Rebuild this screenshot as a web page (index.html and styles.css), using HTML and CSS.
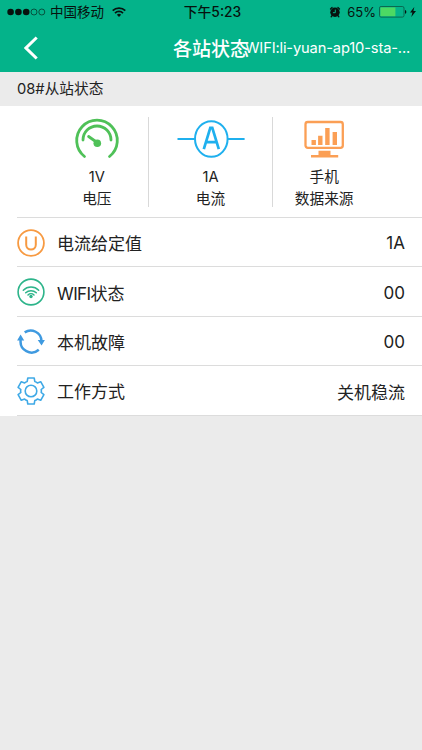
FILE: index.html
```html
<!DOCTYPE html>
<html lang="zh-CN">
<head>
  <meta charset="UTF-8">
  <meta name="viewport" content="width=device-width, initial-scale=1.0">
  <title>各站状态</title>
  <link rel="stylesheet" href="styles.css">
</head>
<body>
  <header>
    <div class="status-bar">
      <div class="carrier">
        <svg class="signal" width="39" height="8" viewBox="0 0 39 8">
          <g fill="#07120e"><circle cx="3.6" cy="4" r="3.3"/><circle cx="11.4" cy="4" r="3.3"/><circle cx="19.2" cy="4" r="3.3"/></g>
          <g fill="none" stroke="#07120e" stroke-width=".6"><circle cx="27" cy="4" r="3"/><circle cx="34.8" cy="4" r="3"/></g>
        </svg>
        <span>中国移动</span>
        <svg class="wifi" width="14" height="10" viewBox="0 0 14 10">
          <g fill="none" stroke="#07120e" stroke-width="1.7"><path d="M.7 3.7a9 9 0 0 1 12.6 0"/><path d="M3 6.1a5.7 5.7 0 0 1 8 0"/></g>
          <path fill="#07120e" d="M4.9 7.8a3 3 0 0 1 4.2 0L7 10z"/>
        </svg>
      </div>
      <div class="time">下午5:23</div>
      <div class="battery">
        <svg width="12" height="12" viewBox="0 0 12 12">
          <circle cx="6" cy="6.2" r="4.7" fill="#07120e"/>
          <path d="M1.5 3l1.6-1.6M10.5 3L8.9 1.4M3 9.8l-.8.9M9 9.8l.8.9" stroke="#07120e" stroke-width="1.3" stroke-linecap="round"/>
          <path d="M6.3 3.6v3.1H3.9" fill="none" stroke="#04b38a" stroke-width="1"/>
        </svg>
        <span>65%</span>
        <svg class="cell" width="28" height="12" viewBox="0 0 28 12">
          <rect x=".5" y=".5" width="24.5" height="10.6" rx="1.6" fill="none" stroke="#0b5543" stroke-width=".8"/>
          <path fill="#4cd964" d="M1.4 1.4h15v8.8h-15z"/>
          <path fill="#07120e" d="M26 4c1.8.2 1.8 3.6 0 3.8z"/>
        </svg>
        <svg class="bolt" width="6" height="10" viewBox="0 0 6 10"><path fill="#07120e" d="M4.3 0L0 5.6h2.4L1.3 10 6 4.1H3.4z"/></svg>
      </div>
    </div>
    <div class="nav-bar">
      <svg class="back" width="15" height="24" viewBox="0 0 15 24"><path d="M12.7 1.5L2 12l10.7 10.5" fill="none" stroke="#fff" stroke-width="3"/></svg>
      <h1>各站状态</h1>
      <span class="ssid">WIFI:li-yuan-ap10-sta-...</span>
    </div>
  </header>

  <div class="section-title">08#从站状态</div>

  <main>
    <div class="summary">
      <div class="item">
        <svg width="46" height="42" viewBox="0 0 46 42">
          <g fill="none" stroke="#4fc158" stroke-width="2.8" stroke-linecap="round">
            <path d="M10.5 38.5A20.3 20.3 0 1 1 35.5 38.5"/>
            <path d="M9 22a14 14 0 0 1 28 0"/>
            <path d="M14.6 18.5l8.5 6"/>
          </g>
          <circle cx="23.3" cy="25.3" r="3.8" fill="#4fc158"/>
        </svg>
        <p>1V</p>
        <p>电压</p>
      </div>
      <div class="item wide">
        <svg width="68" height="42" viewBox="0 0 68 42">
          <g fill="none" stroke="#1fb0ee" stroke-width="2">
            <ellipse cx="34.3" cy="21" rx="16.3" ry="17.8"/>
            <path d="M.5 21H18M50.6 21h17"/>
            <path d="M26.8 31.2l6.5-21.3h2l6.5 21.3M29.3 24.2h10" stroke-width="2.7"/>
          </g>
        </svg>
        <p>1A</p>
        <p>电流</p>
      </div>
      <div class="item">
        <svg width="42" height="42" viewBox="0 0 42 42">
          <rect x="2.5" y="4" width="37.3" height="25.8" rx="2.3" fill="none" stroke="#fb9f55" stroke-width="2.3"/>
          <path fill="#fb9f55" d="M8.5 22h4.4v5H8.5zM15.1 17.8h4.4V27h-4.4zM22.2 10h4.4v17h-4.4zM29.6 14h4.4v13h-4.4zM15.5 32.7h12v4.2h7.7v2.7H8v-2.7h7.5z"/>
        </svg>
        <p>手机</p>
        <p>数据来源</p>
      </div>
    </div>

    <ul class="rows">
      <li>
        <svg width="28" height="28" viewBox="0 0 28 28" fill="none" stroke="#f79a42">
          <circle cx="14" cy="14" r="12.9" stroke-width="1.8"/>
          <path d="M9.2 7.5v8.3a4.8 4.8 0 0 0 9.6 0V7.5" stroke-width="2"/>
        </svg>
        <span>电流给定值</span>
        <b>1A</b>
      </li>
      <li>
        <svg width="28" height="28" viewBox="0 0 28 28" fill="none" stroke="#2db48a">
          <circle cx="14" cy="14" r="12.9" stroke-width="1.6"/>
          <path d="M6.3 12.2a11 11 0 0 1 15.4 0M8.7 14.8a7.6 7.6 0 0 1 10.6 0M11 17a4.3 4.3 0 0 1 6 0" stroke-width="1.5" stroke-linecap="round"/>
          <circle cx="14" cy="18.5" r="1.7" fill="#2db48a" stroke="none"/>
        </svg>
        <span><i>WIFI</i>状态</span>
        <b>00</b>
      </li>
      <li>
        <svg width="28" height="28" viewBox="0 0 28 28">
          <g fill="none" stroke="#3f9ae0" stroke-width="2.5">
            <path d="M7.7 5.4A10.8 10.8 0 0 1 24.5 14"/>
            <path d="M21.8 22.8A11 11 0 0 1 3.7 13"/>
          </g>
          <path fill="#3f9ae0" d="M20.7 13h7.2L24.6 18.6zM.1 13.6L3.6 7.4l3.6 6.2z"/>
        </svg>
        <span>本机故障</span>
        <b>00</b>
      </li>
      <li>
        <svg width="28" height="28" viewBox="-14 -14 28 28" fill="none" stroke="#3fa9e6" stroke-width="1.6" stroke-linejoin="round">
          <path d="M-3.2-13H3.2L3.8-9.6Q5.3-9.2 6.4-8.1L9.7-9.3 12.9-3.7 10.2-1.5Q10.6 0 10.2 1.5L12.9 3.7 9.7 9.3 6.4 8.1Q5.3 9.2 3.8 9.6L3.2 13H-3.2L-3.8 9.6Q-5.3 9.2-6.4 8.1L-9.7 9.3-12.9 3.7-10.2 1.5Q-10.6 0-10.2-1.5L-12.9-3.7-9.7-9.3-6.4-8.1Q-5.3-9.2-3.8-9.6z"/>
          <circle r="5.8"/>
        </svg>
        <span>工作方式</span>
        <b>关机稳流</b>
      </li>
    </ul>
  </main>
</body>
</html>
```
FILE: styles.css
```css
/* General Page Styling */
body {
  font-family: Inter, "Noto Sans CJK SC", sans-serif;
  background: #ebebeb;
  margin: 0;
  color: #222;
}
svg {
  display: block;
  flex: none;
}

/* Header */
header {
  height: 72px;
  background: #04b38a;
}
.status-bar {
  display: grid;
  grid-template-columns: 1fr auto 1fr;
  align-items: center;
  height: 24px;
  padding: 0 6px 0 7px;
  font-size: 13.5px;
  line-height: 24px;
  color: #07120e;
}
.carrier, .battery {
  display: flex;
  align-items: center;
}
.carrier span {
  margin: 0 8px 0 4px;
}
.time {
  padding-left: 2px;
  font-size: 13.8px;
  font-weight: 500;
}
.battery {
  justify-content: flex-end;
}
.battery span {
  margin: 0 3px 0 6px;
  font-size: 13px;
}
.bolt {
  margin-left: 3px;
}
.nav-bar {
  display: flex;
  align-items: center;
  height: 47px;
  padding: 0 0 0 24px;
  color: #fff;
}
h1 {
  margin: 0 0 0 134px;
  font-size: 19px;
  font-weight: 500;
  white-space: nowrap;
}
.ssid {
  margin-left: -4px;
  font-size: 14.7px;
  letter-spacing: -0.15px;
  white-space: nowrap;
}

.section-title {
  height: 34px;
  padding-left: 17px;
  font-size: 14.7px;
  line-height: 35px;
}
main {
  background: #fff;
}

/* Summary */
.summary {
  display: flex;
  height: 90px;
  padding: 11px 47px 10px 46px;
}
.item {
  display: flex;
  flex-direction: column;
  align-items: center;
  width: 102px;
  font-size: 14.7px;
}
.wide {
  width: 124px;
  border: solid #d9d9d9;
  border-width: 0 1px;
}
.item p {
  margin: 0;
  line-height: 21.5px;
}
.item svg {
  margin: 1px 0 7px;
}

/* Rows */
.rows {
  margin: 0;
  padding: 0 0 0 17px;
  list-style: none;
}
.rows li {
  display: flex;
  align-items: center;
  height: 47.4px;
  padding: 1px 17px 0 0;
  border-top: 1px solid #dcdcdc;
  font-size: 17px;
}
.rows li:last-child {
  border-bottom: 1px solid #dcdcdc;
}
.rows span {
  margin-left: 12px;
}
.rows i {
  font-style: normal;
  letter-spacing: -0.6px;
}
.rows b {
  margin-left: auto;
  padding-top: 1px;
  font-weight: 400;
}
```
